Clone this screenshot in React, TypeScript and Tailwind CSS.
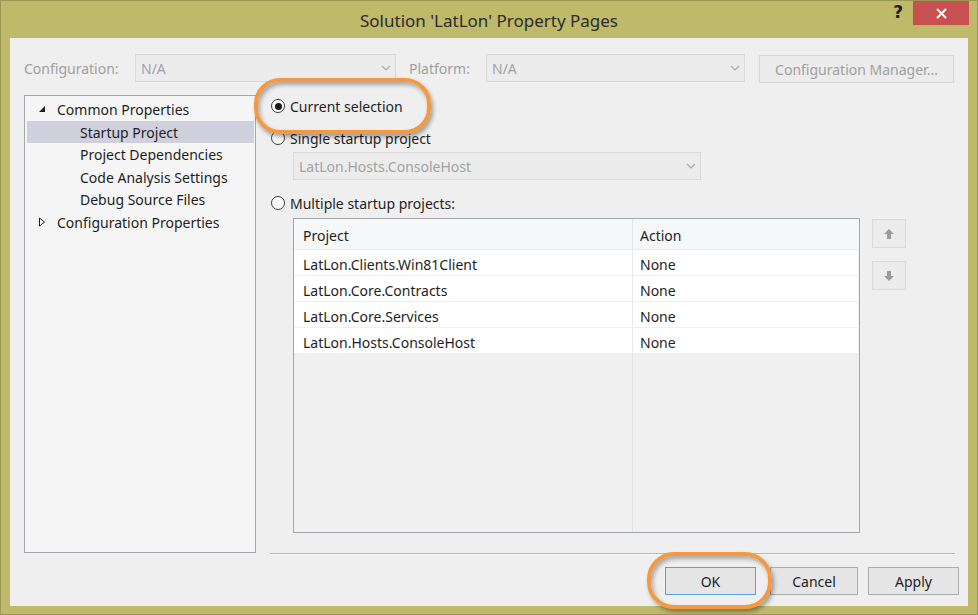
import React from "react";

function Chevron() {
  return (
    <svg width="10" height="6" viewBox="0 0 10 6" className="shrink-0">
      <polyline points="1,1 5,5 9,1" fill="none" stroke="#a9a9a9" strokeWidth="1.2" />
    </svg>
  );
}

function Radio({ checked }: { checked?: boolean }) {
  return (
    <span className="w-[14px] h-[14px] rounded-full border border-[#3c3c3c] bg-[#fcfcfc] flex items-center justify-center shrink-0">
      {checked && <span className="w-[7px] h-[7px] rounded-full bg-[#1a1a1a]" />}
    </span>
  );
}

function DisabledSelect({ text, w }: { text: string; w: string }) {
  return (
    <div className={`${w} h-[28px] border border-[#d9d9d9] bg-[#ececec] flex items-center justify-between pl-[5px] pr-[4px]`}>
      <span className="text-[#a2a2a2] leading-none pt-[2px]">{text}</span>
      <Chevron />
    </div>
  );
}

const rows = [
  "LatLon.Clients.Win81Client",
  "LatLon.Core.Contracts",
  "LatLon.Core.Services",
  "LatLon.Hosts.ConsoleHost",
];

export default function App() {
  return (
    <div className="relative w-[978px] h-[615px] bg-[#bfb96a] border border-[#9a9656] flex flex-col font-['Noto_Sans',sans-serif] text-[14px] text-[#1e1e1e] overflow-hidden">
      {/* Title bar */}
      <div className="h-[37px] shrink-0 grid grid-cols-[1fr_auto_1fr]">
        <div />
        <div className="flex items-center justify-center pt-[1px]">
          <span className="text-[17px] text-[#2b2b2b] leading-none">Solution 'LatLon' Property Pages</span>
        </div>
        <div className="flex items-start justify-end pr-[8px]">
          <span className="mt-[3px] mr-[10px] text-[17px] font-bold leading-none text-[#1c1c1c] font-['DejaVu_Sans',sans-serif]">?</span>
          <div className="w-[56px] h-[24px] bg-[#c75050] flex items-center justify-center">
            <svg width="11" height="11" viewBox="0 0 11 11">
              <line x1="1" y1="1" x2="10" y2="10" stroke="#fff" strokeWidth="2" />
              <line x1="10" y1="1" x2="1" y2="10" stroke="#fff" strokeWidth="2" />
            </svg>
          </div>
        </div>
      </div>

      {/* Client area */}
      <div className="mx-[9px] h-[568px] bg-[#efefef] flex flex-col">
        {/* Configuration row */}
        <div className="flex items-center pt-[16px] pl-[14px] h-[44px]">
          <span className="w-[111px] text-[#a0a0a0] leading-none pt-[2px]">Configuration:</span>
          <DisabledSelect text="N/A" w="w-[261px]" />
          <span className="ml-[13px] w-[77px] text-[#a0a0a0] leading-none pt-[2px]">Platform:</span>
          <DisabledSelect text="N/A" w="w-[259px]" />
          <div className="ml-[14px] mt-[2px] w-[195px] h-[28px] border border-[#d5d5d5] bg-[#ececec] flex items-center justify-center text-[#a0a0a0] leading-none pt-[2px]">
            Configuration Manager...
          </div>
        </div>

        {/* Main */}
        <div className="flex items-start mt-[13px] pl-[14px] h-[460px]">
          {/* Tree */}
          <div className="w-[232px] h-[458px] border border-[#a4a7ae] bg-[#f5f5f5] pt-[2px] px-[1px]">
            <div className="h-[22.5px] flex items-center">
              <svg width="8" height="8" viewBox="0 0 8 8" className="ml-[12px]">
                <polygon points="7,1 7,7 1,7" fill="#1e1e1e" />
              </svg>
              <span className="ml-[11px] leading-none pt-[2px]">Common Properties</span>
            </div>
            <div className="h-[22.5px] flex items-center bg-[#cfd0dc] ml-[1px]">
              <span className="ml-[53px] leading-none pt-[2px]">Startup Project</span>
            </div>
            {["Project Dependencies", "Code Analysis Settings", "Debug Source Files"].map((t) => (
              <div key={t} className="h-[22.5px] flex items-center">
                <span className="ml-[54px] leading-none pt-[2px]">{t}</span>
              </div>
            ))}
            <div className="h-[22.5px] flex items-center">
              <svg width="8" height="10" viewBox="0 0 8 10" className="ml-[12px]">
                <polygon points="1.5,1 6.5,5 1.5,9" fill="none" stroke="#1e1e1e" strokeWidth="1" />
              </svg>
              <span className="ml-[11px] leading-none pt-[2px]">Configuration Properties</span>
            </div>
          </div>

          {/* Right column */}
          <div className="ml-[14px] w-[685px] flex flex-col">
            <div className="mt-[1px] h-[20px] flex items-center gap-[5px] pl-[1px]">
              <Radio checked />
              <span className="leading-none pt-[2px]">Current selection</span>
            </div>
            <div className="mt-[12px] h-[20px] flex items-center gap-[5px] pl-[1px]">
              <Radio />
              <span className="leading-none pt-[2px]">Single startup project</span>
            </div>
            <div className="mt-[4px] ml-[23px]">
              <DisabledSelect text="LatLon.Hosts.ConsoleHost" w="w-[408px]" />
            </div>
            <div className="mt-[13px] h-[20px] flex items-center gap-[5px] pl-[1px]">
              <Radio />
              <span className="leading-none pt-[2px]">Multiple startup projects:</span>
            </div>
            <div className="mt-[5px] ml-[23px] flex items-start">
              {/* Table */}
              <div className="w-[567px] h-[315px] border border-[#a2a6ad] bg-[#f0f0f0] flex flex-col">
                <div className="h-[31px] shrink-0 grid grid-cols-[339px_1fr] bg-[#f6f7f8] border-b border-[#e6eaee]">
                  <div className="flex items-center pl-[9px] pt-[4px] border-r border-[#e2e6eb] leading-none">Project</div>
                  <div className="flex items-center pl-[7px] pt-[4px] leading-none">Action</div>
                </div>
                {rows.map((r) => (
                  <div key={r} className="h-[26px] shrink-0 grid grid-cols-[339px_1fr] bg-white border-b border-[#eceff3] mr-[1px]">
                    <div className="flex items-center pl-[9px] pt-[4px] border-r border-[#e6e9ed] leading-none">{r}</div>
                    <div className="flex items-center pl-[7px] pt-[4px] leading-none">None</div>
                  </div>
                ))}
                <div className="flex-1 flex">
                  <div className="w-[339px] border-r border-[#e0e3e7]" />
                </div>
              </div>
              {/* Up / down */}
              <div className="ml-[12px] flex flex-col gap-[13px] pt-[1px]">
                <div className="w-[34px] h-[29px] border border-[#dadada] bg-[#ececec] flex items-center justify-center">
                  <svg width="10" height="10" viewBox="0 0 10 10">
                    <polygon points="5,0 10,5 0,5" fill="#9b9b9b" />
                    <rect x="3" y="5" width="4" height="5" fill="#9b9b9b" />
                  </svg>
                </div>
                <div className="w-[34px] h-[29px] border border-[#dadada] bg-[#ececec] flex items-center justify-center">
                  <svg width="10" height="10" viewBox="0 0 10 10">
                    <rect x="3" y="0" width="4" height="5" fill="#9b9b9b" />
                    <polygon points="0,5 10,5 5,10" fill="#9b9b9b" />
                  </svg>
                </div>
              </div>
            </div>
            {/* Separator */}
            <div className="mt-[20px] h-[1px] bg-[#b8b8b8]" />
            <div className="h-[1px] bg-[#f9f9f9]" />
          </div>
        </div>

        {/* Buttons */}
        <div className="mt-[12px] flex justify-end pr-[9px]">
          <div className="w-[91px] h-[28px] border border-[#5d9de3] bg-[#e5e5e5] flex items-center justify-center leading-none pt-[2px]">OK</div>
          <div className="ml-[14px] w-[88px] h-[28px] border border-[#acacac] bg-[#e5e5e5] flex items-center justify-center leading-none pt-[2px]">Cancel</div>
          <div className="ml-[10px] w-[91px] h-[28px] border border-[#acacac] bg-[#e5e5e5] flex items-center justify-center leading-none pt-[2px]">Apply</div>
        </div>
      </div>

      {/* Orange annotation highlights */}
      <div className="absolute left-[253px] top-[77px] w-[177px] h-[56px] rounded-[26px] border-[4px] border-[#f4993f] shadow-[2px_3px_4px_rgba(0,0,0,0.35),inset_2px_3px_4px_rgba(0,0,0,0.3)]" />
      <div className="absolute left-[646px] top-[551px] w-[125px] h-[57px] rounded-[27px] border-[4px] border-[#f4993f] shadow-[2px_3px_4px_rgba(0,0,0,0.35),inset_2px_3px_4px_rgba(0,0,0,0.3)]" />
    </div>
  );
}
